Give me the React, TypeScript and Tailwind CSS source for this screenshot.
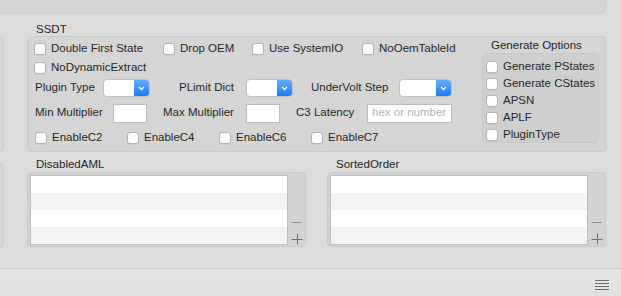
import type { ReactNode } from 'react';

const font = { fontFamily: '"Liberation Sans", Arial, sans-serif' };

function Check({ label }: { label?: string }) {
  return (
    <span className="flex items-center gap-[5px]">
      <span className="h-[12px] w-[12px] shrink-0 rounded-[3px] border border-[#b4b4b4] bg-white shadow-[0_0.5px_0.5px_rgba(0,0,0,0.08)]" />
      {label && <span className="whitespace-nowrap">{label}</span>}
    </span>
  );
}

function Popup({ w }: { w: number }) {
  return (
    <span className="flex h-[18px] overflow-hidden rounded-[4px] border border-[#c2c2c2] bg-white" style={{ width: w }}>
      <span className="flex-1" />
      <span className="flex w-[15px] items-center justify-center bg-gradient-to-b from-[#62acfc] to-[#1b7bf3]">
        <svg width="7" height="5" viewBox="0 0 7 5" fill="none">
          <path d="M1 1l2.5 2.5L6 1" stroke="white" strokeWidth="1.3" />
        </svg>
      </span>
    </span>
  );
}

function Field({ w, placeholder }: { w: number; placeholder?: string }) {
  return (
    <span
      className="flex h-[19px] items-center border border-[#bcbcbc] bg-white px-[4px] text-[#b3b3b3]"
      style={{ width: w }}
    >
      {placeholder}
    </span>
  );
}

function Col({ w, children }: { w: number; children: ReactNode }) {
  return (
    <span className="flex shrink-0 items-center" style={{ width: w }}>
      {children}
    </span>
  );
}

function ListBox({ title }: { title: string }) {
  return (
    <div className="flex w-[279px] flex-col">
      <div className="h-[20px] pl-[9px] pt-[5px] leading-[14px]">{title}</div>
      <div className="flex h-[75px] rounded-[4px] border border-[#cbcbcb] bg-[#d3d3d3] pl-[2px] pt-[2px]">
        <div className="flex h-[70px] w-[258px] flex-col border border-[#bdbdbd] bg-white">
          <div className="h-[17px] bg-white" />
          <div className="h-[17px] bg-[#f3f3f3]" />
          <div className="h-[17px] bg-white" />
          <div className="h-[17px] bg-[#f3f3f3]" />
        </div>
        <div className="flex flex-1 flex-col items-center pt-[42px] text-[#7d7d7d]">
          <svg width="11" height="11" viewBox="0 0 11 11">
            <path d="M0.5 5.5h10" stroke="#8a8a8a" strokeWidth="1" />
          </svg>
          <svg width="12" height="12" viewBox="0 0 12 12" className="mt-[5px]">
            <path d="M0.5 6.5h11M6.5 0.5v11" stroke="#6f6f6f" strokeWidth="1" />
          </svg>
        </div>
      </div>
    </div>
  );
}

export default function App() {
  return (
    <div className="flex h-[296px] w-[621px] flex-col overflow-hidden bg-[#dcdcdc] text-[11.5px] text-[#262626]" style={font}>
      <div className="h-[14px] w-[606px] shrink-0 rounded-br-[5px] border-b border-r border-[#cdcdcd] bg-[#d6d6d6]" />

      <div className="flex flex-1">
        <div className="flex w-[4px] flex-col">
          <div className="mt-[23px] h-[115px] rounded-r-[4px] border-r border-y border-[#cbcbcb] bg-[#d5d5d5]" />
          <div className="mt-[11px] h-[84px] rounded-r-[4px] border-r border-y border-[#cbcbcb] bg-[#d5d5d5]" />
        </div>

        <div className="ml-[23px] flex w-[579px] flex-col">
          <div className="h-[22px] pl-[9px] pt-[8px] leading-[14px]">SSDT</div>
          <div className="flex h-[116px] rounded-[4px] border border-[#cbcbcb] bg-[#d5d5d5]">
            <div className="flex flex-1 flex-col pl-[6px] pt-[3px]">
              <div className="flex h-[18px] items-center">
                <Col w={129}><Check label="Double First State" /></Col>
                <Col w={89}><Check label="Drop OEM" /></Col>
                <Col w={110}><Check label="Use SystemIO" /></Col>
                <Col w={100}><Check label="NoOemTableId" /></Col>
              </div>
              <div className="mt-[1px] flex h-[18px] items-center">
                <Check label="NoDynamicExtract" />
              </div>
              <div className="mt-[2px] flex h-[18px] items-center pl-[1px]">
                <Col w={68}>Plugin Type</Col>
                <Col w={76}><Popup w={47} /></Col>
                <Col w={67}>PLimit Dict</Col>
                <Col w={65}><Popup w={47} /></Col>
                <Col w={88}>UnderVolt Step</Col>
                <Popup w={53} />
              </div>
              <div className="mt-[7px] flex h-[18px] items-center pl-[1px]">
                <Col w={78}>Min Multiplier</Col>
                <Col w={50}><Field w={34} /></Col>
                <Col w={83}>Max Multiplier</Col>
                <Col w={50}><Field w={34} /></Col>
                <Col w={71}>C3 Latency</Col>
                <Field w={85} placeholder="hex or number" />
              </div>
              <div className="mt-[7px] flex h-[18px] items-center pl-[1px]">
                <Col w={92}><Check label="EnableC2" /></Col>
                <Col w={92}><Check label="EnableC4" /></Col>
                <Col w={92}><Check label="EnableC6" /></Col>
                <Check label="EnableC7" />
              </div>
            </div>

            <div className="flex w-[123px] flex-col pr-[6px]">
              <div className="h-[16px] pl-[9px] pt-[1px] leading-[14px]">Generate Options</div>
              <div className="flex h-[90px] flex-col rounded-[4px] border border-[#c8c8c8] bg-[#cfcfcf] pl-[3px] pt-[4px]">
                {['Generate PStates', 'Generate CStates', 'APSN', 'APLF', 'PluginType'].map((t) => (
                  <div key={t} className="flex h-[17px] items-center">
                    <Check label={t} />
                  </div>
                ))}
              </div>
            </div>
          </div>

          <div className="flex gap-[21px]">
            <ListBox title="DisabledAML" />
            <ListBox title="SortedOrder" />
          </div>
        </div>
      </div>

      <div className="flex h-[28px] shrink-0 border-t border-[#c6c6c6] bg-gradient-to-b from-[#e4e4e4] to-[#e0e0e0]">
        <div className="flex-1" />
        <div className="flex w-[44px] flex-col items-end pr-[12px] pt-[11px]">
          <div className="h-[1px] w-[14px] bg-[#6e6e6e]" />
          <div className="mt-[2px] h-[1px] w-[14px] bg-[#6e6e6e]" />
          <div className="mt-[2px] h-[1px] w-[14px] bg-[#6e6e6e]" />
          <div className="mt-[2px] h-[1px] w-[14px] bg-[#6e6e6e]" />
        </div>
      </div>
    </div>
  );
}
